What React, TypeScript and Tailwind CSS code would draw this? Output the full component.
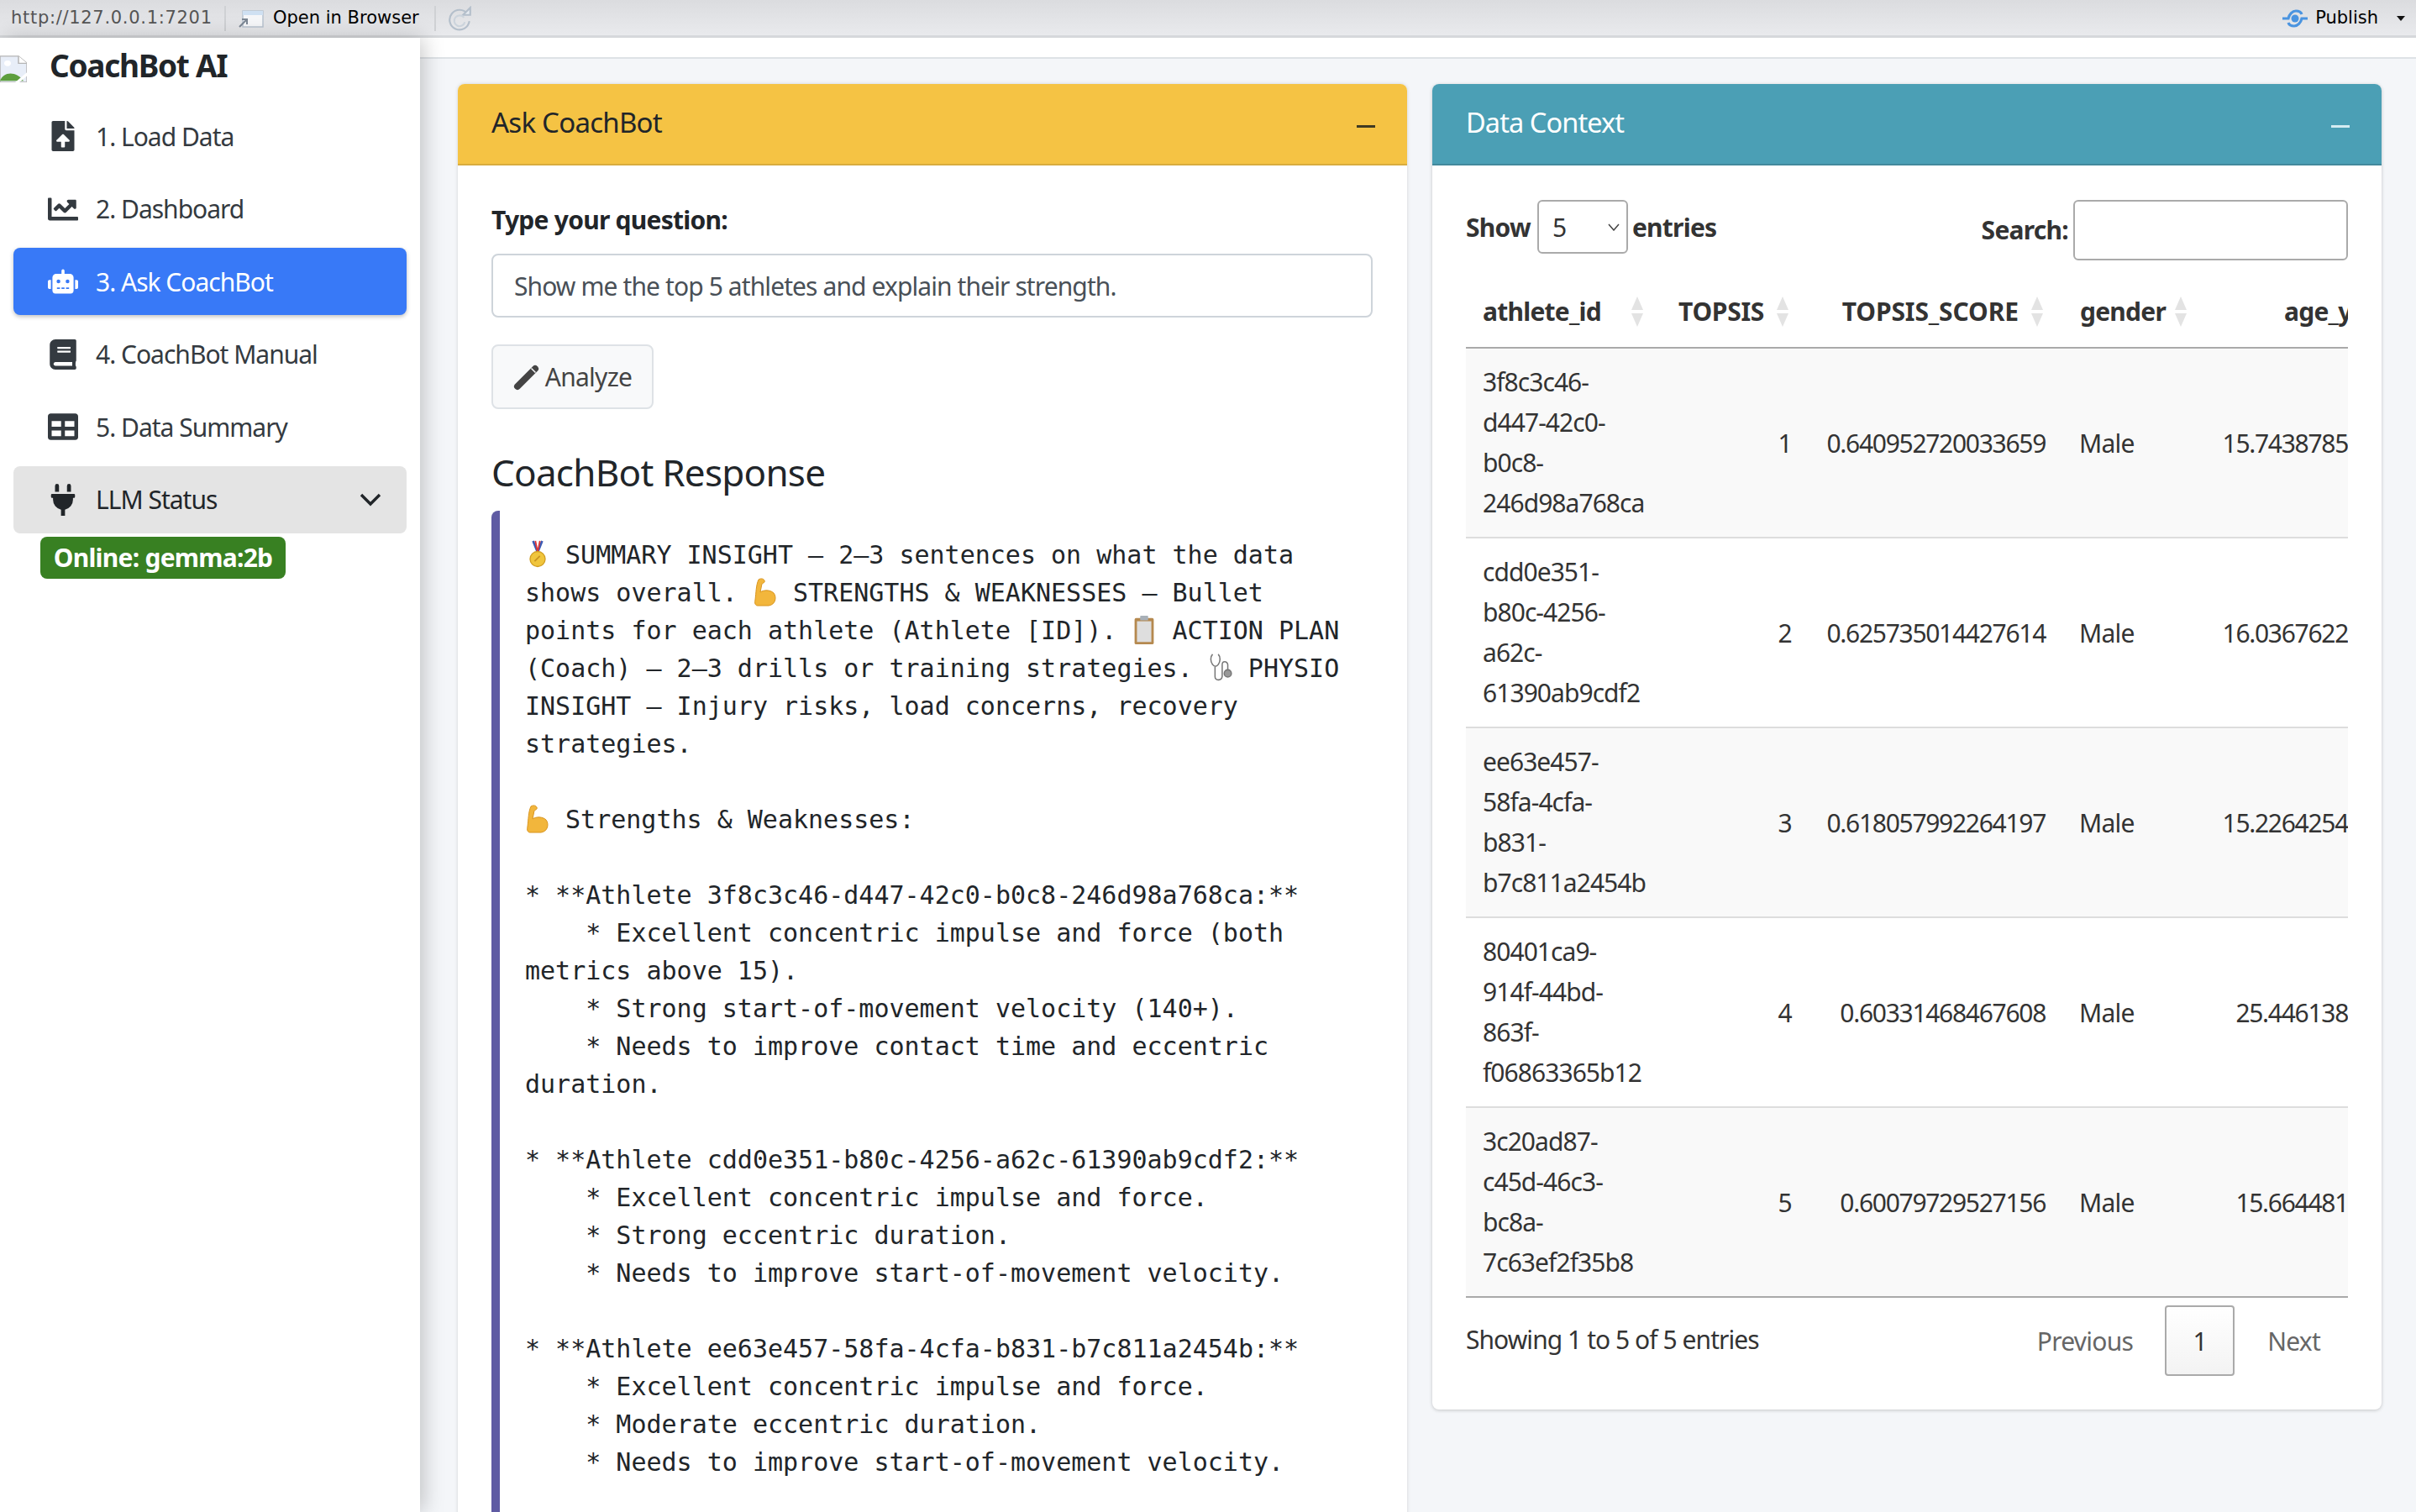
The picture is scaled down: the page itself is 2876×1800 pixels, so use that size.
import React from "react";
import { FaFileUpload, FaChartLine, FaRobot, FaBook, FaTable, FaPlug } from "react-icons/fa";

const Medal = () => (
  <svg viewBox="0 0 30 40" className="inline-block w-[30px] h-[36px] align-[-8px]">
    <path d="M9 1l6 15 6-15" fill="none" stroke="#3b5bb5" strokeWidth="3" />
    <path d="M12 1l3 15 3-15" fill="none" stroke="#d33" strokeWidth="2" />
    <circle cx="15" cy="25" r="10" fill="#f0c53c" stroke="#d19d20" strokeWidth="1.5" />
    <path d="M11 28l7-7" stroke="#c99420" strokeWidth="2" />
  </svg>
);
const Muscle = () => (
  <svg viewBox="0 0 30 36" className="inline-block w-[30px] h-[36px] align-[-8px]">
    <path d="M7 2c3-2 6-1 7 1 1 2-1 3-3 4l-2 10c4-3 12-3 16 1 4 5 2 14-6 15H6C3 33 2 30 3 26 4 18 4 8 7 2z" fill="#f2b63c" stroke="#d9951f" strokeWidth="1" />
  </svg>
);
const Clipboard = () => (
  <svg viewBox="0 0 30 40" className="inline-block w-[30px] h-[38px] align-[-8px]">
    <rect x="3" y="5" width="24" height="33" rx="2" fill="#b5894f" />
    <rect x="6" y="9" width="18" height="26" fill="#dedede" />
    <rect x="10" y="2" width="10" height="6" rx="1" fill="#a8b0b8" />
  </svg>
);
const Stetho = () => (
  <svg viewBox="0 0 30 40" className="inline-block w-[30px] h-[38px] align-[-8px]" fill="none" stroke="#777" strokeWidth="1.6">
    <path d="M5 3C2 6 2 12 5 16c2 3 5 3 7 0 3-4 3-10 0-13" />
    <path d="M8 19v12c0 5 8 6 9 0V16c0-5 6-5 7 0v6" />
    <circle cx="24" cy="27" r="4.5" fill="#999" />
  </svg>
);

const PublishIcon = () => (
  <svg viewBox="0 0 32 24" className="w-[32px] h-[24px]">
    <circle cx="16" cy="12" r="4.5" fill="#4a94e0" />
    <path d="M1 12h7c1-5 5-9 9-9 3 0 6 1 7 4M31 12h-7c-1 5-5 9-9 9-3 0-6-1-7-4" fill="none" stroke="#4a94e0" strokeWidth="3.2" />
  </svg>
);

const Sort = () => (
  <svg viewBox="0 0 18 36" className="w-[18px] h-[36px] shrink-0">
    <path d="M9 0l7 16H2z" fill="#e3e3e3" />
    <path d="M9 36l7-16H2z" fill="#e3e3e3" />
  </svg>
);

type NavProps = { icon: React.ReactNode; label: string; cls?: string };
const NavItem = ({ icon, label, cls = "text-[#343a40]" }: NavProps) => (
  <div className={`h-[80px] rounded-[8px] mx-4 mb-[6.5px] flex items-center ${cls}`}>
    <div className="w-[88px] flex justify-center pl-[30px] text-[36px]">{icon}</div>
    <span className="ml-[10px] text-[30px] tracking-[-1px]">{label}</span>
  </div>
);

const rows = [
  { id: ["3f8c3c46-", "d447-42c0-", "b0c8-", "246d98a768ca"], r: 1, s: "0.640952720033659", a: "15.7438785" },
  { id: ["cdd0e351-", "b80c-4256-", "a62c-", "61390ab9cdf2"], r: 2, s: "0.625735014427614", a: "16.0367622" },
  { id: ["ee63e457-", "58fa-4cfa-", "b831-", "b7c811a2454b"], r: 3, s: "0.618057992264197", a: "15.2264254" },
  { id: ["80401ca9-", "914f-44bd-", "863f-", "f06863365b12"], r: 4, s: "0.60331468467608", a: "25.446138" },
  { id: ["3c20ad87-", "c45d-46c3-", "bc8a-", "7c63ef2f35b8"], r: 5, s: "0.60079729527156", a: "15.664481" },
];

const responseRest = `* **Athlete 3f8c3c46-d447-42c0-b0c8-246d98a768ca:**
    * Excellent concentric impulse and force (both
metrics above 15).
    * Strong start-of-movement velocity (140+).
    * Needs to improve contact time and eccentric
duration.

* **Athlete cdd0e351-b80c-4256-a62c-61390ab9cdf2:**
    * Excellent concentric impulse and force.
    * Strong eccentric duration.
    * Needs to improve start-of-movement velocity.

* **Athlete ee63e457-58fa-4cfa-b831-b7c811a2454b:**
    * Excellent concentric impulse and force.
    * Moderate eccentric duration.
    * Needs to improve start-of-movement velocity.`;

export default function App() {
  return (
    <div className="w-[2876px] h-[1800px] overflow-hidden flex flex-col bg-[#f4f6f9] font-['Noto_Sans',sans-serif] text-[#212529] tracking-[-0.75px]">
      {/* IDE toolbar */}
      <div className="h-[45px] shrink-0 flex items-center justify-between bg-gradient-to-b from-[#dbdcdf] to-[#e9eaed] border-b-[3px] border-[#d6d8db] font-['DejaVu_Sans',sans-serif] text-[21px] tracking-normal pr-[13px] pl-[13px]">
        <div className="flex items-center pt-[2px]">
          <span className="text-[#555] w-[240px] whitespace-nowrap tracking-[0.7px]">http://127.0.0.1:7201</span>
          <div className="w-[2px] h-[30px] bg-[#cfd1d4] ml-[14px]" />
          <svg viewBox="0 0 32 24" className="w-[32px] h-[24px] ml-[14px]">
            <rect x="6" y="3" width="24" height="19" fill="#f6f7f9" stroke="#b9c3cf" strokeWidth="1.5" />
            <rect x="6" y="3" width="24" height="5" fill="#cfe0f2" />
            <path d="M2 22l8-8M5 13h6v6" fill="none" stroke="#7c8794" strokeWidth="2" />
          </svg>
          <span className="ml-[10px] text-black whitespace-nowrap">Open in Browser</span>
          <div className="w-[2px] h-[30px] bg-[#cfd1d4] ml-[18px]" />
          <svg viewBox="0 0 28 28" className="w-[30px] h-[30px] ml-[14px]" fill="none" stroke="#b4bfcb" strokeWidth="2">
            <path d="M22 9a11 11 0 1 0 2 8" />
            <path d="M17 10h8V2z" fill="#e6ebf1" />
            <path d="M18 13a6 6 0 1 0 1 5" stroke="#ccd4dc" />
          </svg>
        </div>
        <div className="flex items-center pt-[2px]">
          <PublishIcon />
          <span className="ml-[8px] text-black">Publish</span>
          <svg viewBox="0 0 10 6" className="w-[10px] h-[6px] ml-[22px]">
            <path d="M0 0h10L5 6z" fill="#111" />
          </svg>
        </div>
      </div>

      <div className="flex flex-1 min-h-0">
        {/* Sidebar */}
        <aside className="w-[500px] shrink-0 bg-white shadow-[4px_0_24px_rgba(0,0,0,0.22)] z-10 flex flex-col">
          <div className="h-[66px] flex items-center shrink-0">
            <svg viewBox="0 0 32 38" preserveAspectRatio="none" className="w-[32px] h-[32px] mt-[7px]">
              <path d="M0 1h22l10 10v27H0z" fill="#e8eef8" stroke="#b5b5b5" strokeWidth="1.5" />
              <path d="M22 1v10h10" fill="#fff" stroke="#b5b5b5" strokeWidth="1.5" />
              <path d="M0 36c4-14 20-14 28 0z" fill="#5c9e3d" />
              <path d="M18 38L32 24v5l-9 9z" fill="#fff" />
              <circle cx="9" cy="11" r="4" fill="#fff" />
            </svg>
            <span className="ml-[27px] text-[37px] font-bold text-[#212529] tracking-[-1.3px]">CoachBot AI</span>
          </div>
          <div className="flex flex-col pt-[11px]">
            <NavItem icon={<FaFileUpload />} label="1. Load Data" />
            <NavItem icon={<FaChartLine />} label="2. Dashboard" />
            <NavItem icon={<FaRobot />} label="3. Ask CoachBot" cls="bg-[#3879f7] text-white shadow-[0_2px_5px_rgba(0,0,0,0.25)]" />
            <NavItem icon={<FaBook />} label="4. CoachBot Manual" />
            <NavItem icon={<FaTable />} label="5. Data Summary" />
            <div className="h-[80px] rounded-[8px] mx-4 bg-[#e4e4e4] text-[#212529] flex items-center">
              <div className="w-[88px] flex justify-center pl-[30px] text-[38px]"><FaPlug /></div>
              <span className="ml-[10px] text-[30px] tracking-[-1px] flex-1">LLM Status</span>
              <svg viewBox="0 0 26 16" className="w-[26px] h-[16px] mr-[30px]">
                <path d="M2 2l11 11L24 2" fill="none" stroke="#212529" strokeWidth="3.4" />
              </svg>
            </div>
            <div className="ml-[48px] mt-[4px] w-[292px] h-[50px] rounded-[8px] bg-[#388022] text-white font-bold text-[30px] flex items-center justify-center whitespace-nowrap">
              Online: gemma:2b
            </div>
          </div>
        </aside>

        {/* Main */}
        <main className="flex-1 min-w-0 flex flex-col">
          <div className="h-[25px] shrink-0 bg-white border-b-2 border-[#dee2e6]" />
          <div className="flex-1 min-h-0 flex items-start gap-[30px] pl-[45px] pr-[41px] pt-[30px]">
            {/* Left card */}
            <section className="w-[1130px] shrink-0 bg-white rounded-[8px] shadow-[0_0_4px_rgba(0,0,0,0.15)] overflow-hidden">
              <div className="h-[97px] bg-[#f5c344] border-b-2 border-[#d8ac3e] flex items-center justify-between pl-10 pr-[38px] text-[#212529]">
                <span className="text-[33px] pb-[4px]">Ask CoachBot</span>
                <div className="w-[22px] h-[3px] bg-[#3f3a22] mt-[6px]" />
              </div>
              <div className="px-10 pt-[42px] pb-[40px]">
                <div className="text-[30px] font-bold h-[44px] flex items-center whitespace-nowrap">Type your question:</div>
                <div className="mt-[19px] h-[76px] w-[1049px] rounded-[8px] border-2 border-[#ced4da] flex items-center px-[25px] text-[30px] tracking-[-0.9px] text-[#495057] whitespace-nowrap">
                  Show me the top 5 athletes and explain their strength.
                </div>
                <div className="mt-[32px] w-[193px] h-[77px] rounded-[8px] border-2 border-[#dee2e6] bg-[#f8f9fa] flex items-center justify-center text-[30px] text-[#444]">
                  <svg viewBox="0 0 32 32" className="w-[32px] h-[32px] mr-[6px]">
                    <path d="M5 27L26 6" fill="none" stroke="#444" strokeWidth="8" strokeLinecap="round" />
                    <path d="M21.500 5.500l5 5" fill="none" stroke="#f8f9fa" strokeWidth="1.5" />
                  </svg>
                  Analyze
                </div>
                <h3 className="mt-[47px] text-[44px] leading-[56px] font-normal text-[#212529] whitespace-nowrap">CoachBot Response</h3>
                <div className="mt-[18px] w-[1049px] rounded-l-[8px] border-l-[10px] border-[#5f5ba3] pl-[30px] pt-[30px] pb-[200px]">
                  <pre className="font-['DejaVu_Sans_Mono',monospace] text-[30px] leading-[45px] tracking-normal text-[#212529] whitespace-pre-wrap">
                    <Medal /> SUMMARY INSIGHT – 2–3 sentences on what the data{"\n"}shows overall. <Muscle /> STRENGTHS &amp; WEAKNESSES – Bullet{"\n"}points for each athlete (Athlete [ID]). <Clipboard /> ACTION PLAN{"\n"}(Coach) – 2–3 drills or training strategies. <Stetho /> PHYSIO{"\n"}INSIGHT – Injury risks, load concerns, recovery{"\n"}strategies.{"\n\n"}<Muscle /> Strengths &amp; Weaknesses:{"\n\n"}
                    {responseRest}
                  </pre>
                </div>
              </div>
            </section>

            {/* Right card */}
            <section className="w-[1130px] shrink-0 bg-white rounded-[8px] shadow-[0_1px_4px_rgba(0,0,0,0.2)] overflow-hidden">
              <div className="h-[97px] bg-[#4b9fb5] border-b-2 border-[#43899c] flex items-center justify-between pl-10 pr-[38px] text-white">
                <span className="text-[32.5px] tracking-[-0.9px] pb-[3px]">Data Context</span>
                <div className="w-[22px] h-[3px] bg-[#d5ecf2] mt-[6px]" />
              </div>
              <div className="px-10 pt-[41px] pb-[40px] text-[#333]">
                <div className="flex items-start justify-between h-[72px]">
                  <div className="flex items-center h-[64px] text-[30px] font-bold">
                    <span>Show</span>
                    <div className="ml-[8px] mr-[5px] w-[108px] h-[64px] rounded-[6px] border-2 border-[#aaa] flex items-center justify-between pl-[16px] pr-[8px] font-normal">
                      <span>5</span>
                      <svg viewBox="0 0 14 9" className="w-[14px] h-[9px]"><path d="M1 1l6 7 6-7" fill="none" stroke="#444" strokeWidth="1.5" /></svg>
                    </div>
                    <span>entries</span>
                  </div>
                  <div className="flex items-center text-[30px] font-bold">
                    <span className="-mt-[2px]">Search:</span>
                    <div className="ml-[6px] w-[327px] h-[72px] rounded-[6px] border-2 border-[#aaa] bg-white" />
                  </div>
                </div>
                <div className="mt-[32px] w-[1050px] overflow-hidden">
                  <table className="table-fixed w-[1050px] border-collapse text-[30px]">
                    <colgroup>
                      <col className="w-[232px]" />
                      <col className="w-[175px]" />
                      <col className="w-[303px]" />
                      <col className="w-[169px]" />
                      <col className="w-[171px]" />
                    </colgroup>
                    <thead>
                      <tr className="h-[72px] border-b-2 border-[#aaa] font-bold">
                        <th className="pl-5 pr-0 pb-[14px] text-left"><div className="flex items-center justify-between pr-[19px]"><span>athlete_id</span><Sort /></div></th>
                        <th className="p-0 pb-[14px] text-left"><div className="flex items-center justify-between pr-[21px]"><span className="pl-[21px] whitespace-nowrap tracking-[-0.3px]">TOPSIS</span><Sort /></div></th>
                        <th className="p-0 pb-[14px]"><div className="flex items-center justify-end pr-[21px]"><span className="mr-[13px] tracking-[-0.1px]">TOPSIS_SCORE</span><Sort /></div></th>
                        <th className="p-0 pb-[14px] text-left"><div className="flex items-center justify-between pl-[21px] pr-[19px]"><span>gender</span><Sort /></div></th>
                        <th className="p-0 pb-[14px] text-left overflow-hidden"><span className="pl-[95px] whitespace-nowrap">age_years</span></th>
                      </tr>
                    </thead>
                    <tbody>
                      {rows.map((row, i) => (
                        <tr key={row.r} className={`border-b-2 ${i === 4 ? "border-[#aaa]" : "border-[#ddd]"} ${i % 2 === 0 ? "bg-[#f9f9f9]" : "bg-white"}`}>
                          <td className="py-4 pl-5 pr-0 leading-[48px] tracking-[-0.95px]">
                            {row.id.map((l) => <div key={l}>{l}</div>)}
                          </td>
                          <td className="pr-[19px] text-right">{row.r}</td>
                          <td className="pr-5 text-right whitespace-nowrap tracking-[-1.3px]">{row.s}</td>
                          <td className="pl-[20px]">Male</td>
                          <td className="text-right whitespace-nowrap tracking-[-1.3px]">{row.a}</td>
                        </tr>
                      ))}
                    </tbody>
                  </table>
                </div>
                <div className="flex items-start justify-between mt-[9px]">
                  <span className="text-[30px] tracking-[-0.95px] mt-[18px]">Showing 1 to 5 of 5 entries</span>
                  <div className="flex items-center text-[30px] text-[#666]">
                    <span>Previous</span>
                    <div className="ml-[38px] w-[83px] h-[84px] rounded-[4px] border-2 border-[#aaa] bg-gradient-to-b from-white to-[#f3f3f3] flex items-center justify-center text-[#333]">1</div>
                    <span className="ml-[39px] mr-[33px]">Next</span>
                  </div>
                </div>
              </div>
            </section>
          </div>
        </main>
      </div>
    </div>
  );
}
